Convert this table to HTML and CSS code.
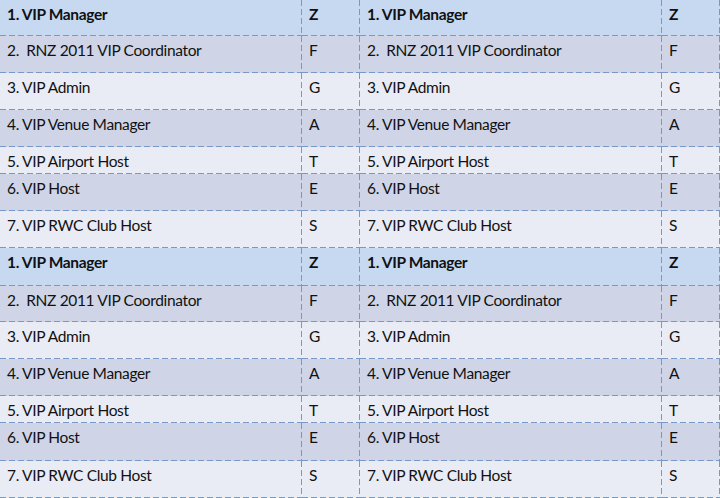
FILE: index.html
```html
<!DOCTYPE html>
<html>
<head>
<meta charset="utf-8">
<link rel="stylesheet" href="styles.css">
</head>
<body>
<div class="table">
  <div class="c hdr b">1. VIP Manager</div><div class="c hdr b">Z</div><div class="c hdr b">1. VIP Manager</div><div class="c hdr b">Z</div>
  <div class="c dark">2.&nbsp; RNZ 2011 VIP Coordinator</div><div class="c dark">F</div><div class="c dark">2.&nbsp; RNZ 2011 VIP Coordinator</div><div class="c dark">F</div>
  <div class="c light">3. VIP Admin</div><div class="c light">G</div><div class="c light">3. VIP Admin</div><div class="c light">G</div>
  <div class="c dark">4. VIP Venue Manager</div><div class="c dark">A</div><div class="c dark">4. VIP Venue Manager</div><div class="c dark">A</div>
  <div class="c light">5. VIP Airport Host</div><div class="c light">T</div><div class="c light">5. VIP Airport Host</div><div class="c light">T</div>
  <div class="c dark">6. VIP Host</div><div class="c dark">E</div><div class="c dark">6. VIP Host</div><div class="c dark">E</div>
  <div class="c light">7. VIP RWC Club Host</div><div class="c light">S</div><div class="c light">7. VIP RWC Club Host</div><div class="c light">S</div>
  <div class="c hdr b">1. VIP Manager</div><div class="c hdr b">Z</div><div class="c hdr b">1. VIP Manager</div><div class="c hdr b">Z</div>
  <div class="c dark">2.&nbsp; RNZ 2011 VIP Coordinator</div><div class="c dark">F</div><div class="c dark">2.&nbsp; RNZ 2011 VIP Coordinator</div><div class="c dark">F</div>
  <div class="c light">3. VIP Admin</div><div class="c light">G</div><div class="c light">3. VIP Admin</div><div class="c light">G</div>
  <div class="c dark">4. VIP Venue Manager</div><div class="c dark">A</div><div class="c dark">4. VIP Venue Manager</div><div class="c dark">A</div>
  <div class="c light">5. VIP Airport Host</div><div class="c light">T</div><div class="c light">5. VIP Airport Host</div><div class="c light">T</div>
  <div class="c dark">6. VIP Host</div><div class="c dark">E</div><div class="c dark">6. VIP Host</div><div class="c dark">E</div>
  <div class="c light">7. VIP RWC Club Host</div><div class="c light">S</div><div class="c light">7. VIP RWC Club Host</div><div class="c light">S</div>
</div>
</body>
</html>
```
FILE: styles.css
```css
html, body {
  margin: 0;
  padding: 0;
  background: #e9ecf4;
}
.table {
  width: 720px;
  height: 498px;
  display: grid;
  grid-template-columns: 302px 58px 302px 58px;
  grid-template-rows: 36px 37px 37px 37px 27px 37px 37px 38px 36px 37px 37px 27px 38px 37px;
  font-family: Lato, "Liberation Sans", sans-serif;
  font-size: 15.5px;
  letter-spacing: -0.35px;
  line-height: 1.2;
  color: #111;
}
.c {
  padding: 5px 7px 0 7px;
  white-space: nowrap;
  overflow: hidden;
  --dash: #7898c8;
  background:
    repeating-linear-gradient(90deg, var(--dash) 0 6px, transparent 6px 9px) left bottom / 100% 1px no-repeat,
    repeating-linear-gradient(180deg, var(--dash) 0 6px, transparent 6px 9px) right top / 1px 100% no-repeat,
    var(--bg);
}
.hdr { --bg: #c6d9f0; }
.dark { --bg: #cfd5e7; }
.light { --bg: #e9ecf4; }
.b { font-weight: 700; }
```
